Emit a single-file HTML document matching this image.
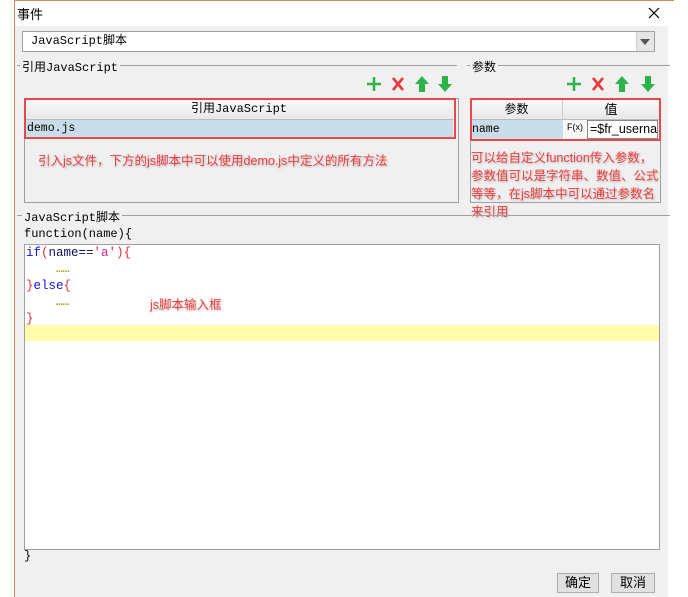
<!DOCTYPE html>
<html><head><meta charset="utf-8"><style>
*{margin:0;padding:0;box-sizing:border-box}
body{width:688px;height:597px;background:#fff;position:relative;overflow:hidden;font-family:"Liberation Sans","Noto Sans CJK SC",sans-serif;font-size:12px;color:#000}
.a{position:absolute}
.mono{font-family:"Liberation Mono","Noto Sans CJK SC",monospace;font-size:11.5px}
.red{color:#f03c3c;font-family:"Liberation Sans","Noto Sans CJK SC",sans-serif;font-size:12.5px;text-shadow:1px 1px 2px rgba(0,0,0,.25)}
.line{background:#a0a0a0;height:1px}
.btn{border:1px solid #adadad;background:#e1e1e1;text-align:center;line-height:18px;font-size:13px}
</style></head><body>
<div class="a" style="left:14px;top:0;width:1px;height:597px;background:#d08a5a"></div>
<div class="a" style="left:14px;top:0;width:660px;height:1px;background:#d08a5a"></div>
<div class="a" style="left:15px;top:26px;width:653px;height:571px;background:#f0f0f0"></div>
<div class="a" style="left:17px;top:4px;font-size:13px">事件</div>
<svg class="a" style="left:648px;top:7px" width="12" height="12"><path d="M1 1L11 11M11 1L1 11" stroke="#000" stroke-width="1.2"/></svg>
<div class="a mono" style="left:22px;top:31px;width:633px;height:21px;background:#fff;border:1px solid #a0a0a0;padding:0 0 0 8px;line-height:19px;font-size:12px">JavaScript脚本</div>
<div class="a" style="left:636px;top:32px;width:18px;height:19px;background:#e6e6e6;border-left:1px solid #ccc"></div>
<svg class="a" style="left:640px;top:39px" width="10" height="6"><path d="M0 0H10L5 6Z" fill="#555"/></svg>
<div class="a line" style="left:17px;top:65px;width:440px"></div>
<div class="a mono" style="left:20px;top:58px;background:#f0f0f0;padding:0 2px;font-size:12px">引用JavaScript</div>
<div class="a line" style="left:467px;top:65px;width:203px"></div>
<div class="a" style="left:470px;top:58px;background:#f0f0f0;padding:0 2px;font-size:12px">参数</div>
<svg class="a" style="left:366px;top:75px" width="95" height="18">
<path d="M8 2V16M1 9H15" stroke="#2db24a" stroke-width="2.5"/>
<path d="M27 3L37 15M37 3L27 15" stroke="#e83a3a" stroke-width="2.6"/>
<path d="M56 1L63 9H59V17H53V9H49Z" fill="#2db24a"/>
<path d="M79 17L86 9H82V1H76V9H72Z" fill="#2db24a"/>
</svg>
<svg class="a" style="left:566px;top:75px" width="95" height="18">
<path d="M8 2V16M1 9H15" stroke="#2db24a" stroke-width="2.5"/>
<path d="M27 3L37 15M37 3L27 15" stroke="#e83a3a" stroke-width="2.6"/>
<path d="M56 1L63 9H59V17H53V9H49Z" fill="#2db24a"/>
<path d="M82 17L89 9H85V1H79V9H75Z" fill="#2db24a"/>
</svg>
<div class="a" style="left:24px;top:98px;width:435px;height:105px;border:1px solid #a0a0a0;background:#f0f0f0"></div>
<div class="a mono" style="left:25px;top:99px;width:428px;height:21px;background:linear-gradient(#fafafa,#e8e8e8);border-bottom:1px solid #bbb;text-align:center;line-height:21px;font-size:12px">引用JavaScript</div>
<div class="a mono" style="left:25px;top:120px;width:428px;height:17px;background:#c8dcea;line-height:17px;padding-left:2px">demo.js</div>
<div class="a" style="left:24px;top:98px;width:432px;height:41px;border:2px solid #e84848"></div>
<div class="a red" style="left:38px;top:150px">引入js文件，下方的js脚本中可以使用demo.js中定义的所有方法</div>
<div class="a" style="left:470px;top:98px;width:191px;height:105px;border:1px solid #a0a0a0;background:#f0f0f0"></div>
<div class="a" style="left:471px;top:99px;width:92px;height:21px;background:linear-gradient(#fafafa,#e8e8e8);border-right:1px solid #ccc;border-bottom:1px solid #bbb;text-align:center;line-height:21px">参数</div>
<div class="a" style="left:563px;top:99px;width:96px;height:21px;background:linear-gradient(#fafafa,#e8e8e8);border-bottom:1px solid #bbb;text-align:center;line-height:21px;font-size:13px">值</div>
<div class="a mono" style="left:471px;top:120px;width:92px;height:19px;background:#c8dcea;line-height:19px;padding-left:1px">name</div>
<div class="a" style="left:563px;top:120px;width:24px;height:19px;background:#f7f7f7;font-size:9px;text-align:center;line-height:15px">F(x)</div>
<div class="a" style="left:587px;top:120px;width:71px;height:19px;background:#fff;border:1px solid #888;font-size:12.5px;line-height:17px;padding-left:2px;overflow:hidden;white-space:nowrap">=$fr_userna</div>
<div class="a" style="left:470px;top:98px;width:191px;height:43px;border:2px solid #e84848"></div>
<div class="a red" style="left:471px;top:149px;line-height:18px;width:205px">可以给自定义function传入参数，<br>参数值可以是字符串、数值、公式<br>等等，在js脚本中可以通过参数名<br>来引用</div>
<div class="a line" style="left:17px;top:215px;width:653px"></div>
<div class="a mono" style="left:22px;top:208px;background:#f0f0f0;padding:0 2px;font-size:12px">JavaScript脚本</div>
<div class="a mono" style="left:24px;top:227px;font-size:12px">function(name){</div>
<div class="a" style="left:24px;top:244px;width:636px;height:306px;background:#fff;border:1px solid #a0a0a0"></div>
<div class="a" style="left:25px;top:325px;width:634px;height:16px;background:#fffcaa"></div>
<div class="a mono" style="left:26px;top:245px;font-size:12.5px;line-height:16px;white-space:pre"><span style="color:#1010e0">if</span><span style="color:#e03030">(</span><span style="color:#101060">name==</span><span style="color:#d0208a">'a'</span><span style="color:#e03030">){</span>
    <span style="color:#b0a020;font-size:11px;font-weight:bold">……</span>
<span style="color:#e03030">}</span><span style="color:#1010e0">else</span><span style="color:#e03030">{</span>
    <span style="color:#b0a020;font-size:11px;font-weight:bold">……</span>
<span style="color:#e03030">}</span></div>
<div class="a red" style="left:150px;top:294px">js脚本输入框</div>
<div class="a mono" style="left:24px;top:549px;font-size:12px">}</div>
<div class="a btn" style="left:557px;top:573px;width:42px;height:20px">确定</div>
<div class="a btn" style="left:611px;top:573px;width:44px;height:20px">取消</div>
</body></html>
